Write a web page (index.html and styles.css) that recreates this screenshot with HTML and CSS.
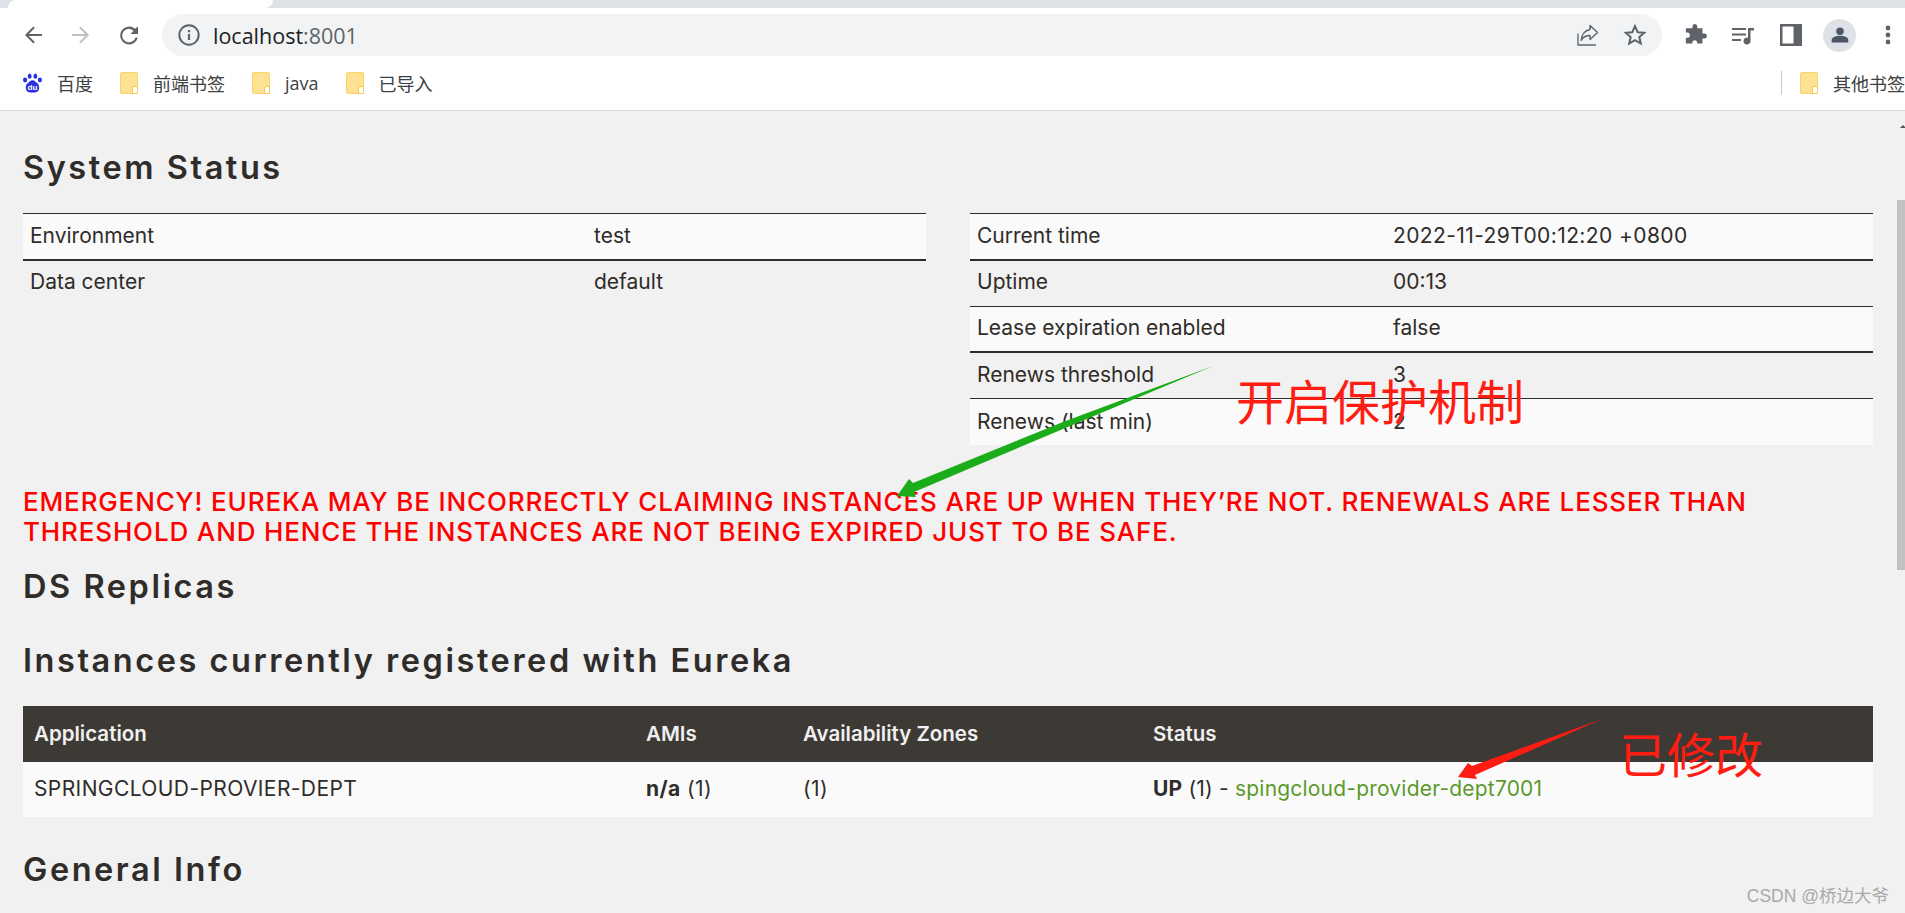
FILE: index.html
```html
<!DOCTYPE html>
<html>
    <head>
        <meta charset="utf-8">
        <title>Eureka</title>
        <link rel="stylesheet" href="styles.css">
    </head>
    <body>
        <!-- browser chrome -->
        <div class="tabstrip"><div class="tab"></div></div>
        <div class="toolbar">
            <svg class="tool" viewBox="0 0 24 24"><path d="M21 11H7.800l6-6L12.400 3.600 4 12l8.400 8.400 1.400-1.400-6-6H21z" fill="#5f6368"/></svg>
            <svg class="tool" viewBox="0 0 24 24"><path d="M3 11h13.200l-6-6 1.400-1.400L20 12l-8.400 8.400-1.400-1.400 6-6H3z" fill="#bdc1c6"/></svg>
            <svg class="tool" viewBox="0 0 24 24"><path d="M21 3.500v7.500h-7.500l3-3A7 7 0 0 0 12 5.700a6.800 6.800 0 1 0 6.500 8.800h2.300A8.900 8.900 0 1 1 18 5.800z" fill="#5f6368"/></svg>
            <div class="omnibox">
                <svg class="info" viewBox="0 0 20 20"><circle cx="10" cy="10" r="8.800" fill="none" stroke="#5f6368" stroke-width="1.800"/><path d="M9 9h2v5.500H9zM9 5.500h2v2H9z" fill="#5f6368"/></svg>
                <span class="url">localhost<span class="port">:8001</span></span>
                <svg class="omni-icon" viewBox="0 0 24 24"><path d="M3 10.500V22h18" fill="none" stroke="#5f6368" stroke-width="1.300"/><path d="M15 2.500l7.500 7-7.500 7v-4c-4 0-7 1.500-8.800 5 .5-6 3.500-10 8.800-11z" fill="none" stroke="#5f6368" stroke-width="1.400" stroke-linejoin="round"/></svg>
                <svg class="omni-icon" viewBox="0 0 24 24"><path d="M12 3.200l2.700 6 6.500.6-4.900 4.300 1.500 6.400L12 17.100l-5.800 3.400 1.500-6.400-4.900-4.300 6.500-.6z" fill="none" stroke="#5f6368" stroke-width="2" stroke-linejoin="miter"/></svg>
            </div>
            <svg class="tool" viewBox="0 0 24 24"><path d="M10 2.500a2.600 2.600 0 0 1 5 0V5h5.500v5.500H23a2.700 2.700 0 0 1 0 5.300h-2.500V21h-5.600v-1.500a2.600 2.600 0 0 0-5 0V21H3v-6h1.500a2.700 2.700 0 0 0 0-5.400H3V5h7z" fill="#5f6368" transform="translate(0 .5) scale(.95)"/></svg>
            <svg class="tool" viewBox="0 0 24 24"><path d="M1 5h14v2H1zM1 10.500h14v2H1zM1 16h9v2H1z" fill="#5f6368"/><path d="M17 5h6v2.500h-3.500V18a3.500 3.500 0 1 1-2.500-3.300z" fill="#5f6368"/></svg>
            <svg class="tool" viewBox="0 0 24 24"><path d="M1 1h22v22H1z" fill="#5f6368"/><path d="M3.500 3.500h11v17h-11z" fill="#fff"/></svg>
            <div class="avatar"><svg viewBox="0 0 24 24"><circle cx="12" cy="7.500" r="4.500" fill="#4a5568"/><path d="M2 21v-3c0-3.500 6-5 10-5s10 1.500 10 5v3z" fill="#4a5568"/></svg></div>
            <svg class="tool" viewBox="0 0 24 24"><circle cx="12" cy="5" r="2.400" fill="#5f6368"/><circle cx="12" cy="12" r="2.400" fill="#5f6368"/><circle cx="12" cy="19" r="2.400" fill="#5f6368"/></svg>
        </div>
        <div class="bookmarks">
            <a class="mark">
                <svg class="paw" viewBox="0 0 20 20"><g fill="#2932e1"><ellipse cx="2.200" cy="6.800" rx="2.200" ry="2.600"/><ellipse cx="7" cy="2.800" rx="2" ry="2.800"/><ellipse cx="13" cy="2.800" rx="2" ry="2.800"/><ellipse cx="17.800" cy="6.800" rx="2.200" ry="2.600"/><path d="M10 7c2.500 0 3.500 2 5.500 3.500 2.500 2.500 2.500 9.500-3.500 9.500H8c-6 0-6-7-3.500-9.500C6.500 9 7.500 7 10 7z"/></g><text x="10" y="17.300" class="du">du</text></svg>
                <span>百度</span>
            </a>
            <a class="mark"><i class="folder"></i><span>前端书签</span></a>
            <a class="mark"><i class="folder"></i><span>java</span></a>
            <a class="mark"><i class="folder"></i><span>已导入</span></a>
            <div class="others">
                <i class="sep"></i>
                <a class="mark"><i class="folder"></i><span>其他书签</span></a>
            </div>
        </div>

        <!-- eureka page -->
        <div class="viewport">
            <div class="page">
                <h2 class="first">System Status</h2>
                <div class="status">
                    <table class="left">
                        <tr><td>Environment</td><td>test</td></tr>
                        <tr><td>Data center</td><td>default</td></tr>
                    </table>
                    <table class="right">
                        <tr><td>Current time</td><td class="time">2022-11-29T00:12:20 +0800</td></tr>
                        <tr><td>Uptime</td><td>00:13</td></tr>
                        <tr><td>Lease expiration enabled</td><td>false</td></tr>
                        <tr><td>Renews threshold</td><td>3</td></tr>
                        <tr><td>Renews (last min)</td><td>2</td></tr>
                    </table>
                </div>
                <h4 class="warning">EMERGENCY! EUREKA MAY BE INCORRECTLY CLAIMING INSTANCES ARE UP WHEN THEY’RE NOT. RENEWALS ARE LESSER THAN THRESHOLD AND HENCE THE INSTANCES ARE NOT BEING EXPIRED JUST TO BE SAFE.</h4>
                <h2 class="replicas">DS Replicas</h2>
                <h2 class="instances">Instances currently registered with Eureka</h2>
                <table class="apps">
                    <tr><th class="c1">Application</th><th class="c2">AMIs</th><th class="c3">Availability Zones</th><th>Status</th></tr>
                    <tr><td>SPRINGCLOUD-PROVIER-DEPT</td><td><b>n/a</b> (1)</td><td>(1)</td><td><b>UP</b> (1) - <a class="inst">spingcloud-provider-dept7001</a></td></tr>
                </table>
                <h2 class="general">General Info</h2>
            </div>
            <div class="scrollbar"><i class="up"></i><div class="thumb"></div></div>

            <!-- hand drawn notes on top of the screenshot -->
            <svg class="notes" viewBox="0 0 1905 802">
                <path d="M1213 255 L1063 311 L913 372 L909 368 L897 385 L916 386 L914 381 L1063 318 Z" fill="#1aad19"/>
                <path d="M1602 608 L1472 655 L1468 652 L1458 666 L1477 668 L1475 664 Z" fill="#ff1c12"/>
            </svg>
            <div class="note note-a">开启保护机制</div>
            <div class="note note-b">已修改</div>
            <div class="mark-csdn">CSDN @桥边大爷</div>
        </div>
    </body>
</html>
```

FILE: styles.css
```css
html, body {
    margin: 0;
    height: 100%;
    overflow: hidden;
    background: #f1f1f1;
}

body {
    display: flex;
    flex-direction: column;
    height: 913px;
    color: #333;
    font-family: "Open Sans", "Noto Sans CJK SC", sans-serif;
}

/* chrome */
.tabstrip {
    height: 8px;
    background: #dee1e6;
}

.tab {
    width: 265px;
    height: 8px;
    margin-left: 8px;
    background: #fff;
    border-radius: 8px 0 8px 0;
}

.toolbar {
    display: flex;
    align-items: center;
    height: 54px;
    box-sizing: border-box;
    padding-left: 21px;
    background: #fff;
}

.tool {
    flex: none;
    width: 24px;
    height: 24px;
    margin-right: 24px;
}

.omnibox {
    display: flex;
    flex: none;
    align-items: center;
    width: 1500px;
    height: 42px;
    margin: 0 21px 0 -3px;
    padding-left: 16px;
    box-sizing: border-box;
    background: #f1f3f4;
    border-radius: 21px;
}

.info {
    width: 22px;
    height: 22px;
}

.url {
    flex: 1;
    margin-left: 13px;
    color: #202124;
    font-family: "Open Sans", sans-serif;
    font-size: 21.5px;
}

.port {
    color: #5f6368;
}

.omni-icon {
    width: 24px;
    height: 24px;
    margin-right: 24px;
}

.omni-icon:last-child {
    margin-right: 15px;
}

.avatar {
    flex: none;
    display: flex;
    align-items: center;
    justify-content: center;
    width: 33px;
    height: 33px;
    margin: 0 20px 0 -4px;
    background: #dee1e6;
    border-radius: 50%;
}

.avatar svg {
    width: 20px;
    height: 20px;
}

.bookmarks {
    display: flex;
    align-items: center;
    height: 42px;
    padding-bottom: 6px;
    padding-left: 23px;
    background: #fff;
    border-bottom: 1px solid #dadce0;
    color: #3c4043;
    font-size: 18px;
}

.mark {
    display: flex;
    align-items: center;
    margin-right: 27px;
    white-space: nowrap;
}

.mark span {
    margin-left: 15px;
}

.paw {
    width: 19px;
    height: 20px;
}

.du {
    fill: #fff;
    font-family: "Liberation Sans", sans-serif;
    font-size: 8.500px;
    font-weight: 700;
    text-anchor: middle;
}

.folder {
    position: relative;
    display: block;
    width: 18px;
    height: 22px;
    box-sizing: border-box;
    background: #fde293;
    border: 1px solid #f9d465;
    border-radius: 2px;
}

.folder::after {
    content: "";
    position: absolute;
    right: -1px;
    bottom: -1px;
    width: 4px;
    height: 6px;
    background: #fff;
    border: 1px solid #f2c94c;
    border-radius: 2px 2px 0 0;
}

.others {
    display: flex;
    align-items: center;
    margin-left: auto;
}

.others .mark {
    margin-right: 0;
}

.sep {
    width: 1px;
    height: 24px;
    margin-right: 18px;
    background: #c8cacd;
}

/* page */
.viewport {
    position: relative;
    display: flex;
    flex: 1;
    overflow: hidden;
    background: #f1f1f1;
}

.page {
    flex: none;
    width: 1850px;
    padding-left: 23px;
}

.scrollbar {
    position: absolute;
    top: 0;
    right: 0;
    width: 8px;
    height: 100%;
}

.up {
    position: absolute;
    top: 14px;
    left: 3px;
    border-left: 3px solid transparent;
    border-right: 3px solid transparent;
    border-bottom: 3px solid #555;
}

.thumb {
    position: absolute;
    top: 89px;
    width: 8px;
    height: 370px;
    background: #c1c1c1;
}

h2 {
    margin: 0;
    color: #2f2c29;
    font-family: Inter, sans-serif;
    font-size: 32.500px;
    font-weight: 600;
    letter-spacing: 2.550px;
    line-height: 40px;
}

.first {
    padding-top: 37px;
}

.status {
    display: flex;
    justify-content: space-between;
    width: 1850px;
    margin-top: 25px;
}

table {
    border-collapse: collapse;
    table-layout: fixed;
    font-family: Inter, sans-serif;
    font-size: 21px;
}

.left, .right {
    width: 903px;
    height: 232px;
    align-self: flex-start;
}

.left {
    height: 85px;
}

.left td:first-child {
    width: 564px;
}

.right td:first-child {
    width: 416px;
}

.left tr:nth-child(odd), .right tr:nth-child(odd) {
    background: #fafafa;
    border-top: 1px solid #2f2c29;
}

.left tr:nth-child(even), .right tr:nth-child(even) {
    border-top: 2px solid #2f2c29;
}

.left td, .right td {
    height: 46px;
    padding: 0 7px 2px;
    box-sizing: border-box;
    color: #2f2c29;
}

.left tr:nth-child(2) td, .right tr:nth-child(2) td {
    padding-bottom: 4px;
}

.time {
    letter-spacing: .4px;
}

.warning {
    width: 1850px;
    margin: 42px 0 0;
    color: #f00;
    font-family: Inter, sans-serif;
    font-size: 26px;
    font-weight: 500;
    letter-spacing: .85px;
    line-height: 30px;
    text-transform: uppercase;
}

.replicas {
    margin-top: 20px;
}

.instances {
    margin-top: 34px;
}

.apps {
    width: 1850px;
    margin-top: 25px;
}

.apps th {
    height: 56px;
    padding: 0 11px 2px;
    box-sizing: border-box;
    background: #3d3934;
    color: #f0f0f0;
    font-size: 20.500px;
    font-weight: 600;
    text-align: left;
}

.apps td {
    height: 55px;
    padding: 0 11px 2px;
    box-sizing: border-box;
    background: #fafafa;
    color: #2f2c29;
    letter-spacing: .4px;
}

.apps td:last-child {
    letter-spacing: .2px;
}

.c1 { width: 612px; }
.c2 { width: 157px; }
.c3 { width: 350px; }

.inst {
    color: #5a9a2a;
}

.general {
    margin-top: 33px;
}

/* notes */
.notes {
    position: absolute;
    top: 0;
    left: 0;
    width: 1905px;
    height: 802px;
    pointer-events: none;
}

.note {
    position: absolute;
    color: #ff1c12;
    font-family: "Noto Sans CJK SC", sans-serif;
    font-size: 48px;
    line-height: 60px;
    white-space: nowrap;
}

.note-a {
    top: 258px;
    left: 1236px;
}

.note-b {
    top: 611px;
    left: 1619px;
}

.mark-csdn {
    position: absolute;
    right: 16px;
    bottom: 6px;
    color: #a9a9a9;
    font-family: "Liberation Sans", "Noto Sans CJK SC", sans-serif;
    font-size: 17.500px;
}
```
